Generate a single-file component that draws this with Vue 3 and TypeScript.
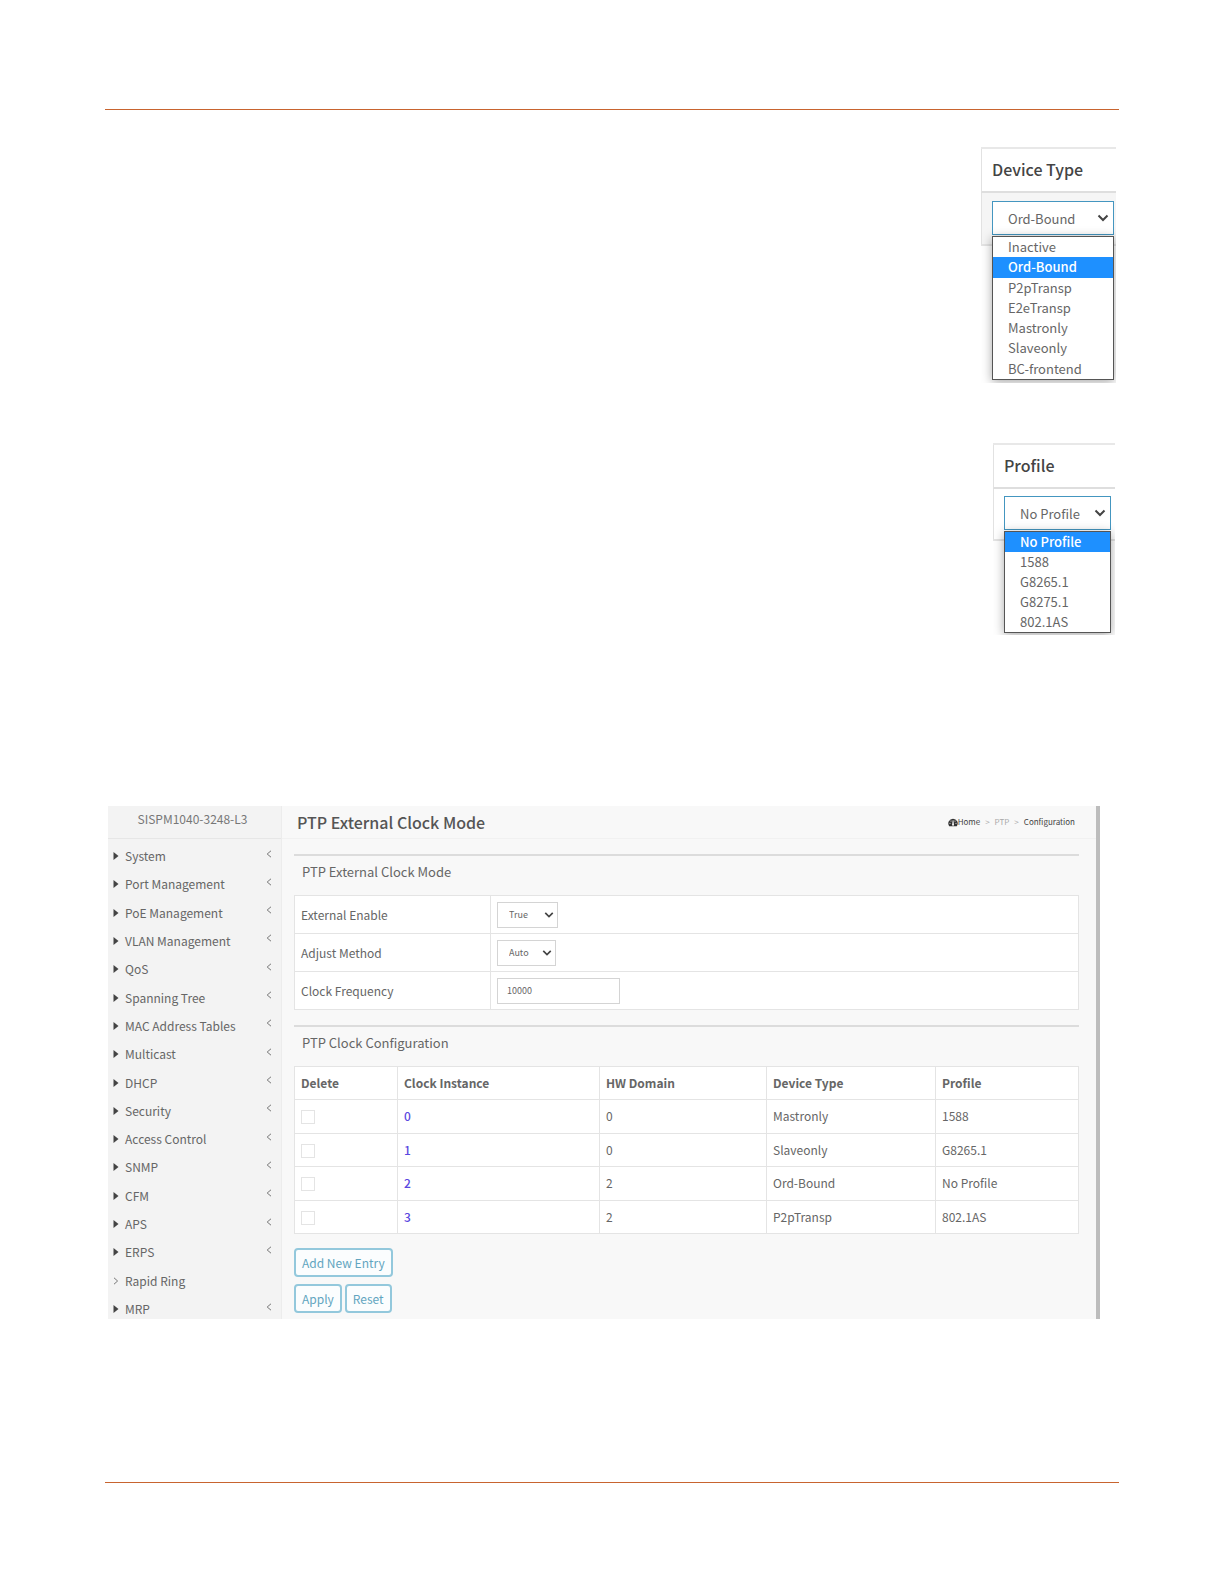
<script setup lang="ts">
import { ref } from 'vue'

interface Picker {
  id: string
  title: string
  selected: string
  options: string[]
}

interface ClockRow {
  instance: number
  domain: number
  device: string
  profile: string
  remove: boolean
}

const devicePicker: Picker = {
  id: 'device-type',
  title: 'Device Type',
  selected: 'Ord-Bound',
  options: ['Inactive', 'Ord-Bound', 'P2pTransp', 'E2eTransp', 'Mastronly', 'Slaveonly', 'BC-frontend'],
}
const profilePicker: Picker = {
  id: 'profile',
  title: 'Profile',
  selected: 'No Profile',
  options: ['No Profile', '1588', 'G8265.1', 'G8275.1', '802.1AS'],
}
const pickers = ref<Picker[]>([devicePicker, profilePicker])

const menu: string[] = [
  'System', 'Port Management', 'PoE Management', 'VLAN Management', 'QoS', 'Spanning Tree',
  'MAC Address Tables', 'Multicast', 'DHCP', 'Security', 'Access Control', 'SNMP', 'CFM',
  'APS', 'ERPS', 'Rapid Ring', 'MRP',
]
const leafItem = 'Rapid Ring'

const externalEnable = ref('True')
const adjustMethod = ref('Auto')
const clockFrequency = ref('10000')

const rows = ref<ClockRow[]>([
  { instance: 0, domain: 0, device: 'Mastronly', profile: '1588', remove: false },
  { instance: 1, domain: 0, device: 'Slaveonly', profile: 'G8265.1', remove: false },
  { instance: 2, domain: 2, device: 'Ord-Bound', profile: 'No Profile', remove: false },
  { instance: 3, domain: 2, device: 'P2pTransp', profile: '802.1AS', remove: false },
])
</script>

<template>
  <div class="page">
    <section v-for="p in pickers" :key="p.id" class="picker" :class="p.id">
      <label class="picker-title" :for="p.id">{{ p.title }}</label>
      <div class="picker-cell">
        <div class="select-wrap">
          <select :id="p.id" v-model="p.selected" class="picker-select">
            <option v-for="o in p.options" :key="o">{{ o }}</option>
          </select>
          <svg class="arrow" viewBox="0 0 12 8" aria-hidden="true"><path d="M1.500 1.500 6 6 10.500 1.500" /></svg>
          <ul class="options" role="listbox" :aria-label="p.title">
            <li v-for="o in p.options" :key="o" role="option" :aria-selected="o === p.selected" :class="{ active: o === p.selected }">{{ o }}</li>
          </ul>
        </div>
      </div>
    </section>

    <div class="console">
      <aside class="sidebar">
        <div class="model">SISPM1040-3248-L3</div>
        <nav class="menu">
          <a v-for="m in menu" :key="m" href="#" class="menu-item">
            <svg v-if="m === leafItem" class="mark line" viewBox="0 0 6 8" aria-hidden="true"><path d="M1 .8 4.600 4 1 7.200" /></svg>
            <svg v-else class="mark" viewBox="0 0 6 8" aria-hidden="true"><path d="M.5 0 5.500 4 .5 8Z" /></svg>
            <span>{{ m }}</span>
            <svg v-if="m !== leafItem" class="chevron" viewBox="0 0 6 8" aria-hidden="true"><path d="M5 .8 1.200 4 5 7.200" /></svg>
          </a>
        </nav>
      </aside>

      <main class="content">
        <header class="topbar">
          <h1>PTP External Clock Mode</h1>
          <nav class="crumbs" aria-label="Breadcrumb">
            <a href="#" class="home">
              <svg viewBox="0 0 20 17" aria-hidden="true">
                <path d="M10 1A9.500 9.500 0 0 0 2.400 16H17.600A9.500 9.500 0 0 0 10 1Z" />
                <g fill="#f8f8f8"><circle cx="4" cy="10" r="1.200" /><circle cx="6" cy="5.500" r="1.200" /><circle cx="14" cy="5.500" r="1.200" /><circle cx="16" cy="10" r="1.200" /><path d="M9.300 4h1.600l.8 7.600a2 2 0 1 1-3.200 0Z" /></g>
              </svg>Home</a>
            <span class="dim">&gt;</span>
            <a href="#" class="dim">PTP</a>
            <span class="dim">&gt;</span>
            <span>Configuration</span>
          </nav>
        </header>

        <section class="block">
          <h2>PTP External Clock Mode</h2>
          <table class="form">
            <tbody>
              <tr>
                <th scope="row"><label for="enable">External Enable</label></th>
                <td>
                  <span class="select-wrap small enable">
                    <select id="enable" v-model="externalEnable"><option>True</option><option>False</option></select>
                    <svg class="arrow" viewBox="0 0 12 8" aria-hidden="true"><path d="M1.500 1.500 6 6 10.500 1.500" /></svg>
                  </span>
                </td>
              </tr>
              <tr>
                <th scope="row"><label for="adjust">Adjust Method</label></th>
                <td>
                  <span class="select-wrap small adjust">
                    <select id="adjust" v-model="adjustMethod"><option>Auto</option></select>
                    <svg class="arrow" viewBox="0 0 12 8" aria-hidden="true"><path d="M1.500 1.500 6 6 10.500 1.500" /></svg>
                  </span>
                </td>
              </tr>
              <tr>
                <th scope="row"><label for="frequency">Clock Frequency</label></th>
                <td><input id="frequency" v-model="clockFrequency" type="text" class="text" /></td>
              </tr>
            </tbody>
          </table>
        </section>

        <section class="block">
          <h2>PTP Clock Configuration</h2>
          <table class="clocks">
            <colgroup><col class="c1" /><col class="c2" /><col class="c3" /><col class="c4" /><col /></colgroup>
            <thead>
              <tr>
                <th scope="col">Delete</th>
                <th scope="col">Clock Instance</th>
                <th scope="col">HW Domain</th>
                <th scope="col">Device Type</th>
                <th scope="col">Profile</th>
              </tr>
            </thead>
            <tbody>
              <tr v-for="r in rows" :key="r.instance">
                <td><input v-model="r.remove" type="checkbox" class="check" :aria-label="`Delete clock ${r.instance}`" /></td>
                <td><a href="#">{{ r.instance }}</a></td>
                <td>{{ r.domain }}</td>
                <td>{{ r.device }}</td>
                <td>{{ r.profile }}</td>
              </tr>
            </tbody>
          </table>
          <div class="actions">
            <button type="button">Add New Entry</button>
          </div>
          <div class="actions">
            <button type="button">Apply</button>
            <button type="button">Reset</button>
          </div>
        </section>
      </main>
    </div>
  </div>
</template>

<style>
body {
  margin: 0;
  background: #fff;
}
</style>

<style scoped>
* {
  box-sizing: border-box;
}
.page {
  margin: 109px 105px 0;
  border-top: 1px solid #c8642f;
  border-bottom: 1px solid #c8642f;
  padding: 37px 0 163px;
  font-family: "Noto Sans CJK SC", "Noto Sans", sans-serif;
  font-size: 12px;
  line-height: 20px;
  color: #666;
}
a {
  color: inherit;
  text-decoration: none;
}
h1,
h2 {
  margin: 0;
}

/* Open pickers */
.picker {
  display: flex;
  flex-direction: column;
  margin-left: auto;
  border-top: 2px solid #e8e8e8;
  font-size: 13px;
  overflow: hidden;
}
.picker.device-type {
  width: 135px;
  height: 236px;
  margin-right: 3px;
}
.picker.profile {
  width: 122px;
  height: 192px;
  margin-top: 60px;
  margin-right: 4px;
}
.picker-title {
  height: 44px;
  padding: 10px 0 0 10px;
  border-left: 1px solid #e2e2e2;
  border-bottom: 2px solid #dedede;
  font-size: 16px;
  font-weight: 500;
  color: #444;
}
.picker-cell {
  height: 53px;
  padding: 8px 0 0 10px;
  border-left: 1px solid #e2e2e2;
  border-bottom: 2px solid #e4e4e4;
  background: #f5f5f5;
}
.profile .picker-cell {
  height: 52px;
  padding-top: 7px;
  background: #fff;
}
.select-wrap {
  display: block;
  position: relative;
}
.device-type .select-wrap {
  width: 122px;
}
.profile .select-wrap {
  width: 107px;
}
select {
  appearance: none;
  display: block;
  width: 100%;
  margin: 0;
  background: #fff;
  border-radius: 0;
  font-family: inherit;
  color: inherit;
  outline: none;
}
.picker-select {
  height: 34px;
  padding: 0 0 0 15px;
  border: 1px solid #4496c0;
  font-size: 13px;
}
.arrow {
  position: absolute;
  right: 5px;
  top: 13px;
  width: 12px;
  height: 8px;
  fill: none;
  stroke: #444;
  stroke-width: 2;
  pointer-events: none;
}
.options {
  position: absolute;
  top: 35px;
  left: 0;
  display: flex;
  flex-direction: column;
  width: 100%;
  margin: 0;
  padding: 0;
  list-style: none;
  border: 1px solid #555;
  background: #fff;
  box-shadow: 0 2px 10px rgba(0, 0, 0, 0.35);
}
.device-type .options {
  height: 144px;
}
.options li {
  flex: 1 0 20px;
  padding-left: 15px;
  line-height: 20px;
}
.options .active {
  background: #1e90ff;
  color: #fff;
  font-weight: 500;
}

/* Switch console */
.console {
  display: flex;
  margin: 171px 19px 0 3px;
  border-right: 4px solid #bdbdbd;
  background: #f8f8f8;
}
.sidebar {
  display: flex;
  flex-direction: column;
  flex: none;
  width: 174px;
  background: #f3f3f3;
  border-right: 1px solid #ececec;
}
.model {
  height: 33px;
  padding: 3px 4px 0 0;
  border-bottom: 1px solid #e6e6e6;
  text-align: center;
  color: #777;
}
.menu {
  flex: 1;
  display: flex;
  flex-direction: column;
  justify-content: space-between;
  padding-top: 7px;
}
.menu-item {
  display: flex;
  align-items: center;
  gap: 6px;
  height: 20px;
  padding: 0 9px 0 5px;
}
.mark {
  width: 6px;
  height: 8px;
  fill: #444;
}
.line,
.chevron {
  fill: none;
  stroke: #777;
  stroke-width: 1;
}
.chevron {
  width: 6px;
  height: 8px;
  margin: 0 0 5px auto;
}
.content {
  flex: 1;
  min-width: 0;
  padding-bottom: 6px;
}
.topbar {
  display: flex;
  align-items: center;
  justify-content: space-between;
  height: 33px;
  padding: 0 21px 0 15px;
  border-bottom: 1px solid #f1f1f1;
}
h1 {
  font-size: 16px;
  font-weight: 500;
  color: #555;
}
.crumbs {
  display: flex;
  gap: 5px;
  font-size: 8px;
  color: #444;
}
.home {
  display: flex;
  align-items: center;
}
.home svg {
  width: 10px;
  height: 9px;
  fill: #333;
}
.crumbs .dim {
  color: #aaa;
}
.block {
  margin: 15px 17px 0 12px;
  border-top: 2px solid #dcdcdc;
}
h2 {
  height: 39px;
  padding: 6px 0 0 8px;
  font-size: 13px;
  font-weight: 400;
}
table {
  width: 100%;
  table-layout: fixed;
  border-collapse: collapse;
  background: #fff;
}
th,
td {
  padding: 0 6px;
  border: 1px solid #e4e4e4;
  text-align: left;
  vertical-align: middle;
}
.form tr {
  height: 38px;
}
.form th {
  width: 196px;
  font-weight: 400;
}
.small select {
  height: 26px;
  padding: 0 0 0 11px;
  border: 1px solid #d4d4d4;
  font-size: 9px;
}
.small .arrow {
  top: 9px;
  right: 4px;
  width: 10px;
}
.enable {
  width: 61px;
}
.adjust {
  width: 59px;
}
.text {
  display: block;
  width: 123px;
  height: 26px;
  margin: 0;
  padding: 0 9px;
  border: 1px solid #d4d4d4;
  background: #fff;
  font-family: inherit;
  font-size: 9px;
  color: inherit;
}
.clocks {
  height: 168px;
}
.clocks th {
  height: 33px;
  font-weight: 700;
}
.clocks a {
  color: #5a48e0;
  font-weight: 500;
}
.c1 {
  width: 103px;
}
.c2 {
  width: 202px;
}
.c3 {
  width: 167px;
}
.c4 {
  width: 169px;
}
.check {
  appearance: none;
  display: block;
  width: 14px;
  height: 14px;
  margin: 2px 0 0;
  border: 1px solid #e4e4e4;
  background: #fff;
}
.actions {
  display: flex;
  gap: 3px;
  margin-top: 7px;
}
.clocks + .actions {
  margin-top: 14px;
}
button {
  height: 29px;
  padding: 0 6px;
  border: 2px solid #93c8dc;
  border-radius: 4px;
  background: #fbfdfe;
  font-family: inherit;
  font-size: 12px;
  line-height: 20px;
  color: #62a5c0;
}
</style>
